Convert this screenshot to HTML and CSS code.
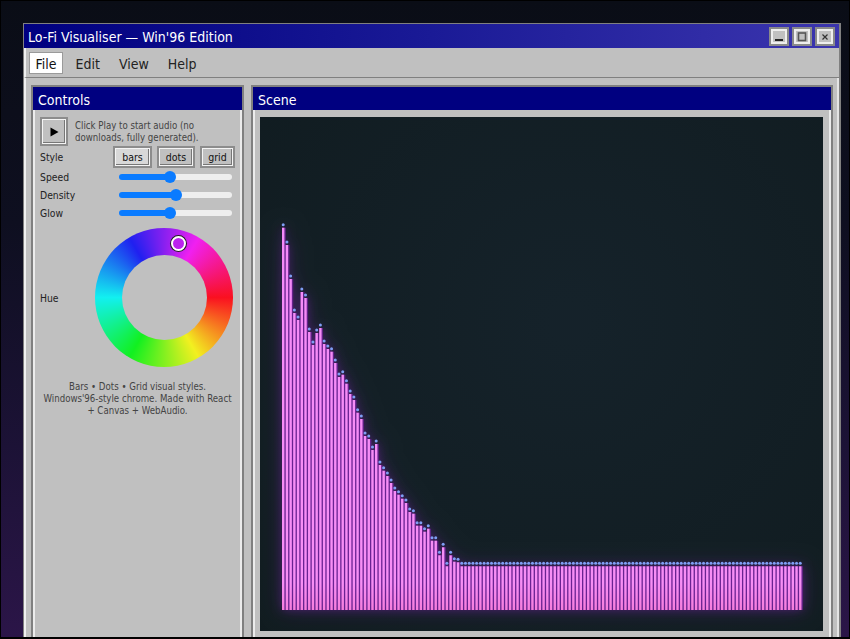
FILE: index.html
```html
<!DOCTYPE html>
<html lang="en">
<head>
<meta charset="utf-8">
<title>Lo-Fi Visualiser — Win'96 Edition</title>
<link rel="stylesheet" href="styles.css">
</head>
<body>
<div class="screen">
  <div class="window">
    <header class="titlebar">
      <span class="title">Lo-Fi Visualiser — Win'96 Edition</span>
      <div class="winbtns">
        <button class="winbtn" aria-label="Minimize"><svg width="10" height="10" viewBox="0 0 10 10"><rect x="1" y="7" width="8" height="2" fill="#222"/></svg></button>
        <button class="winbtn" aria-label="Maximize"><svg width="10" height="10" viewBox="0 0 10 10"><rect x="1.5" y="1" width="7" height="7.5" fill="none" stroke="#555" stroke-width="1.6"/></svg></button>
        <button class="winbtn" aria-label="Close"><svg width="10" height="10" viewBox="0 0 10 10"><path d="M2.5 2.5L7.5 7.5M7.5 2.5L2.5 7.5" stroke="#333" stroke-width="1.2"/></svg></button>
      </div>
    </header>
    <nav class="menubar">
      <button class="menu active">File</button>
      <button class="menu">Edit</button>
      <button class="menu">View</button>
      <button class="menu">Help</button>
    </nav>
    <main class="main">
      <section class="panel controls">
        <h2 class="panelhead">Controls</h2>
        <div class="panelbody controlsbody">
          <div class="playrow">
            <button class="bevel play" aria-label="Play"><svg width="12" height="12" viewBox="0 0 12 12"><path d="M2.5 1.5L10.5 6L2.5 10.5Z" fill="#000"/></svg></button>
            <p class="hint">Click Play to start audio (no downloads, fully generated).</p>
          </div>
          <div class="stylerow">
            <span class="label">Style</span>
            <div class="stylebtns">
              <button class="bevel stylebtn bars">bars</button>
              <button class="bevel stylebtn dots">dots</button>
              <button class="bevel stylebtn grid">grid</button>
            </div>
          </div>
          <label class="sliderrow"><span class="label">Speed</span><input type="range" class="slider" min="0" max="100" value="45" style="--p:45%"></label>
          <label class="sliderrow"><span class="label">Density</span><input type="range" class="slider" min="0" max="100" value="50" style="--p:50%"></label>
          <label class="sliderrow"><span class="label">Glow</span><input type="range" class="slider" min="0" max="100" value="45" style="--p:45%"></label>
          <div class="huerow">
            <span class="label">Hue</span>
            <div class="wheel"><span class="knob"></span></div>
          </div>
          <p class="caption">Bars • Dots • Grid visual styles.<br>Windows'96-style chrome. Made with React<br>+ Canvas + WebAudio.</p>
        </div>
      </section>
      <section class="panel scene">
        <h2 class="panelhead">Scene</h2>
        <div class="panelbody scenebody">
          <canvas id="viz" width="563" height="514"></canvas>
        </div>
      </section>
    </main>
  </div>
</div>
<script src="app.js"></script>
</body>
</html>
```
FILE: styles.css
```css
* { box-sizing: border-box; }
html, body { margin: 0; padding: 0; height: 100%; overflow: hidden; background: #000; }
body { font-family: "DejaVu Sans Condensed", "DejaVu Sans", sans-serif; }
.screen {
  width: 850px; height: 639px; overflow: hidden;
  border: solid #000; border-width: 1px 1px 2px 1px;
  padding: 22px 0 0 22px;
  background: linear-gradient(180deg, #0a0d16 0%, #0e0f20 35%, #1c1236 70%, #2b1548 100%);
}
.window {
  width: 818px; height: 700px;
  border: 1px solid #808080; border-width: 1px 2px 1px 1px;
  background: #c0c0c0;
  display: flex; flex-direction: column;
}
.titlebar {
  height: 24px; flex: none;
  display: flex; align-items: center; justify-content: space-between;
  padding: 0 4px 0 4px;
  background: linear-gradient(90deg, #000080 0%, #1a1a96 50%, #3b35ae 100%);
  color: #fff;
}
.title { font-size: 14px; line-height: 20px; padding-top: 2px; }
.winbtns { display: flex; gap: 3px; margin-top: 1px; }
.winbtn {
  width: 20px; height: 19px; padding: 0;
  border: 2px solid #8a8a8a;
  outline: 2px solid #eee; outline-offset: -4px;
  background: #c0c0c0;
  display: flex; align-items: center; justify-content: center;
}
.menubar {
  height: 30px; flex: none;
  display: flex; gap: 6px;
  padding: 4px 0 0 3px;
  border-left: 2px solid #f0f0f0;
  border-bottom: 1px solid #808080;
}
.menu {
  height: 22px; padding: 2px 5.5px 0;
  font: 14px/18px "DejaVu Sans Condensed", "DejaVu Sans", sans-serif; color: #222;
  background: transparent; border: 1px solid transparent;
}
.menu.active { background: #fff; border-color: #9a9a9a; color: #111; }
.main {
  flex: 1; display: flex; gap: 7px;
  padding: 7px 4px 0 5px;
  border-left: 2px solid #f0f0f0;
  border-right: 2px solid #e4e4e4;
}
.panel { border: 2px solid #808080; background: #c0c0c0; display: flex; flex-direction: column; }
.controls { width: 213px; flex: none; }
.scene { flex: 1; min-width: 0; }
.panelhead {
  margin: 0; height: 23px; padding: 0 5px;
  background: #000080; color: #fff;
  font-size: 14px; font-weight: 400; line-height: 26px;
}
.panelbody { flex: 1; border-left: 2px solid #ececec; border-right: 2px solid #ececec; }
.controlsbody { padding: 7px 5px; color: #222; font-size: 10.3px; }
.scenebody { padding: 7px 5px 0 5px; }
#viz { display: block; width: 563px; height: 514px; }
.playrow { display: flex; gap: 7px; align-items: flex-start; height: 29px; }
.bevel {
  padding: 0; background: #c0c0c0; color: #111;
  border: 2px solid #8c8c8c;
  box-shadow: inset 0 0 0 1px #f4f4f4, inset -2px -2px 0 0 #777;
  display: flex; align-items: center; justify-content: center;
}
.play { width: 28px; height: 29px; flex: none; }
.hint { margin: 0; font-size: 9.6px; line-height: 12px; color: #444; padding-top: 3px; }
.stylerow { display: flex; justify-content: space-between; align-items: center; height: 22px; }
.label { font-size: 10.3px; color: #222; }
.stylebtns { display: flex; gap: 5px; }
.stylebtn { height: 22px; font: 10.5px "DejaVu Sans Condensed", "DejaVu Sans", sans-serif; }
.stylebtn.bars { width: 39px; background: #d8d8d8; }
.stylebtn.dots { width: 38px; }
.stylebtn.grid { width: 35px; }
.sliderrow { display: flex; align-items: center; height: 18px; }
.sliderrow .label { width: 79px; flex: none; }
.slider {
  -webkit-appearance: none; appearance: none;
  width: 113px; height: 12px; margin: 0; background: transparent;
}
.slider::-webkit-slider-runnable-track {
  height: 6px; border-radius: 3px;
  background: linear-gradient(90deg, #0a7bff 0, #0a7bff var(--p), #eee var(--p), #eee 100%);
}
.slider::-webkit-slider-thumb {
  -webkit-appearance: none; appearance: none;
  width: 12px; height: 12px; margin-top: -3px;
  border-radius: 50%; background: #0a7bff; border: 0;
}
.huerow { display: flex; align-items: center; height: 139px; margin-top: 6px; }
.huerow .label { width: 55px; flex: none; }
.wheel {
  position: relative;
  width: 138px; height: 139px; border-radius: 50%;
  background: conic-gradient(from 90deg, #fa1020, #f2f020, #12f020, #12f0f0, #2020f0, #f020f0, #fa1020);
}
.wheel::after {
  content: ""; position: absolute; left: 26.5px; top: 27px;
  width: 85px; height: 85px; border-radius: 50%; background: #c0c0c0;
}
.knob {
  position: absolute; left: 76px; top: 8px; z-index: 1;
  width: 15px; height: 15px; border-radius: 50%;
  background: #bb22ee; border: 2px solid #fff;
  box-shadow: 0 0 0 1px #222;
}
.caption { margin: 14px 0 0; text-align: center; font-size: 9.6px; line-height: 12px; color: #444; white-space: nowrap; }
```
FILE: app.js
```js
(function () {
  var tops = [224.7, 242, 276, 310, 317, 289, 295, 329, 342, 330, 325, 341, 346, 348.7, 360, 374,
    371.7, 380.7, 391, 397, 409.7, 416, 433, 436, 447, 441, 462, 467.7, 473, 480, 488, 491.7,
    495.7, 500, 509, 510.7, 522.7, 522.7, 528.7, 525.7, 537.7, 537.7, 552.3, 544.3, 563.3,
    552.3, 558.7, 559.3];
  var c = document.getElementById('viz');
  var g = c.getContext('2d');
  var W = c.width, H = c.height;
  var bg = g.createRadialGradient(W * 0.55, H * 0.4, 20, W * 0.55, H * 0.4, W * 0.8);
  bg.addColorStop(0, '#15222a');
  bg.addColorStop(1, '#101b1f');
  g.fillStyle = bg;
  g.fillRect(0, 0, W, H);

  var OX = 260, OY = 117, BOTTOM = 610 - OY, PITCH = 3.72, COUNT = 140, BAR = 2.4;
  function capY(i) { return (i < tops.length ? tops[i] : 563.3) - OY; }

  var fill = g.createLinearGradient(0, 100, 0, BOTTOM);
  fill.addColorStop(0, '#f48af8');
  fill.addColorStop(0.93, '#f78ef5');
  fill.addColorStop(1, '#f67edc');

  var i, x, y;
  // glow: draw the whole silhouette once with a wide purple blur
  g.shadowBlur = 20;
  g.shadowColor = 'rgba(130,30,190,0.5)';
  g.fillStyle = 'rgba(110,35,150,0.55)';
  g.beginPath();
  for (i = 0; i < COUNT; i++) {
    x = 282 - OX + i * PITCH;
    y = capY(i) + 3;
    g.rect(x, y, PITCH, BOTTOM - y);
  }
  g.fill();
  g.shadowBlur = 9;
  g.shadowColor = 'rgba(150,40,210,0.55)';
  g.fill();
  g.shadowBlur = 0;
  // solid bars
  g.fillStyle = fill;
  for (i = 0; i < COUNT; i++) {
    x = 282 - OX + i * PITCH;
    y = capY(i) + 3;
    g.fillRect(x, y, BAR, BOTTOM - y);
  }
  // round caps
  g.fillStyle = '#7f9ff4';
  for (i = 0; i < COUNT; i++) {
    x = 282 - OX + i * PITCH;
    y = capY(i);
    g.beginPath();
    g.arc(x + BAR / 2, y, 1.5, 0, Math.PI * 2);
    g.fill();
  }
})();
```
